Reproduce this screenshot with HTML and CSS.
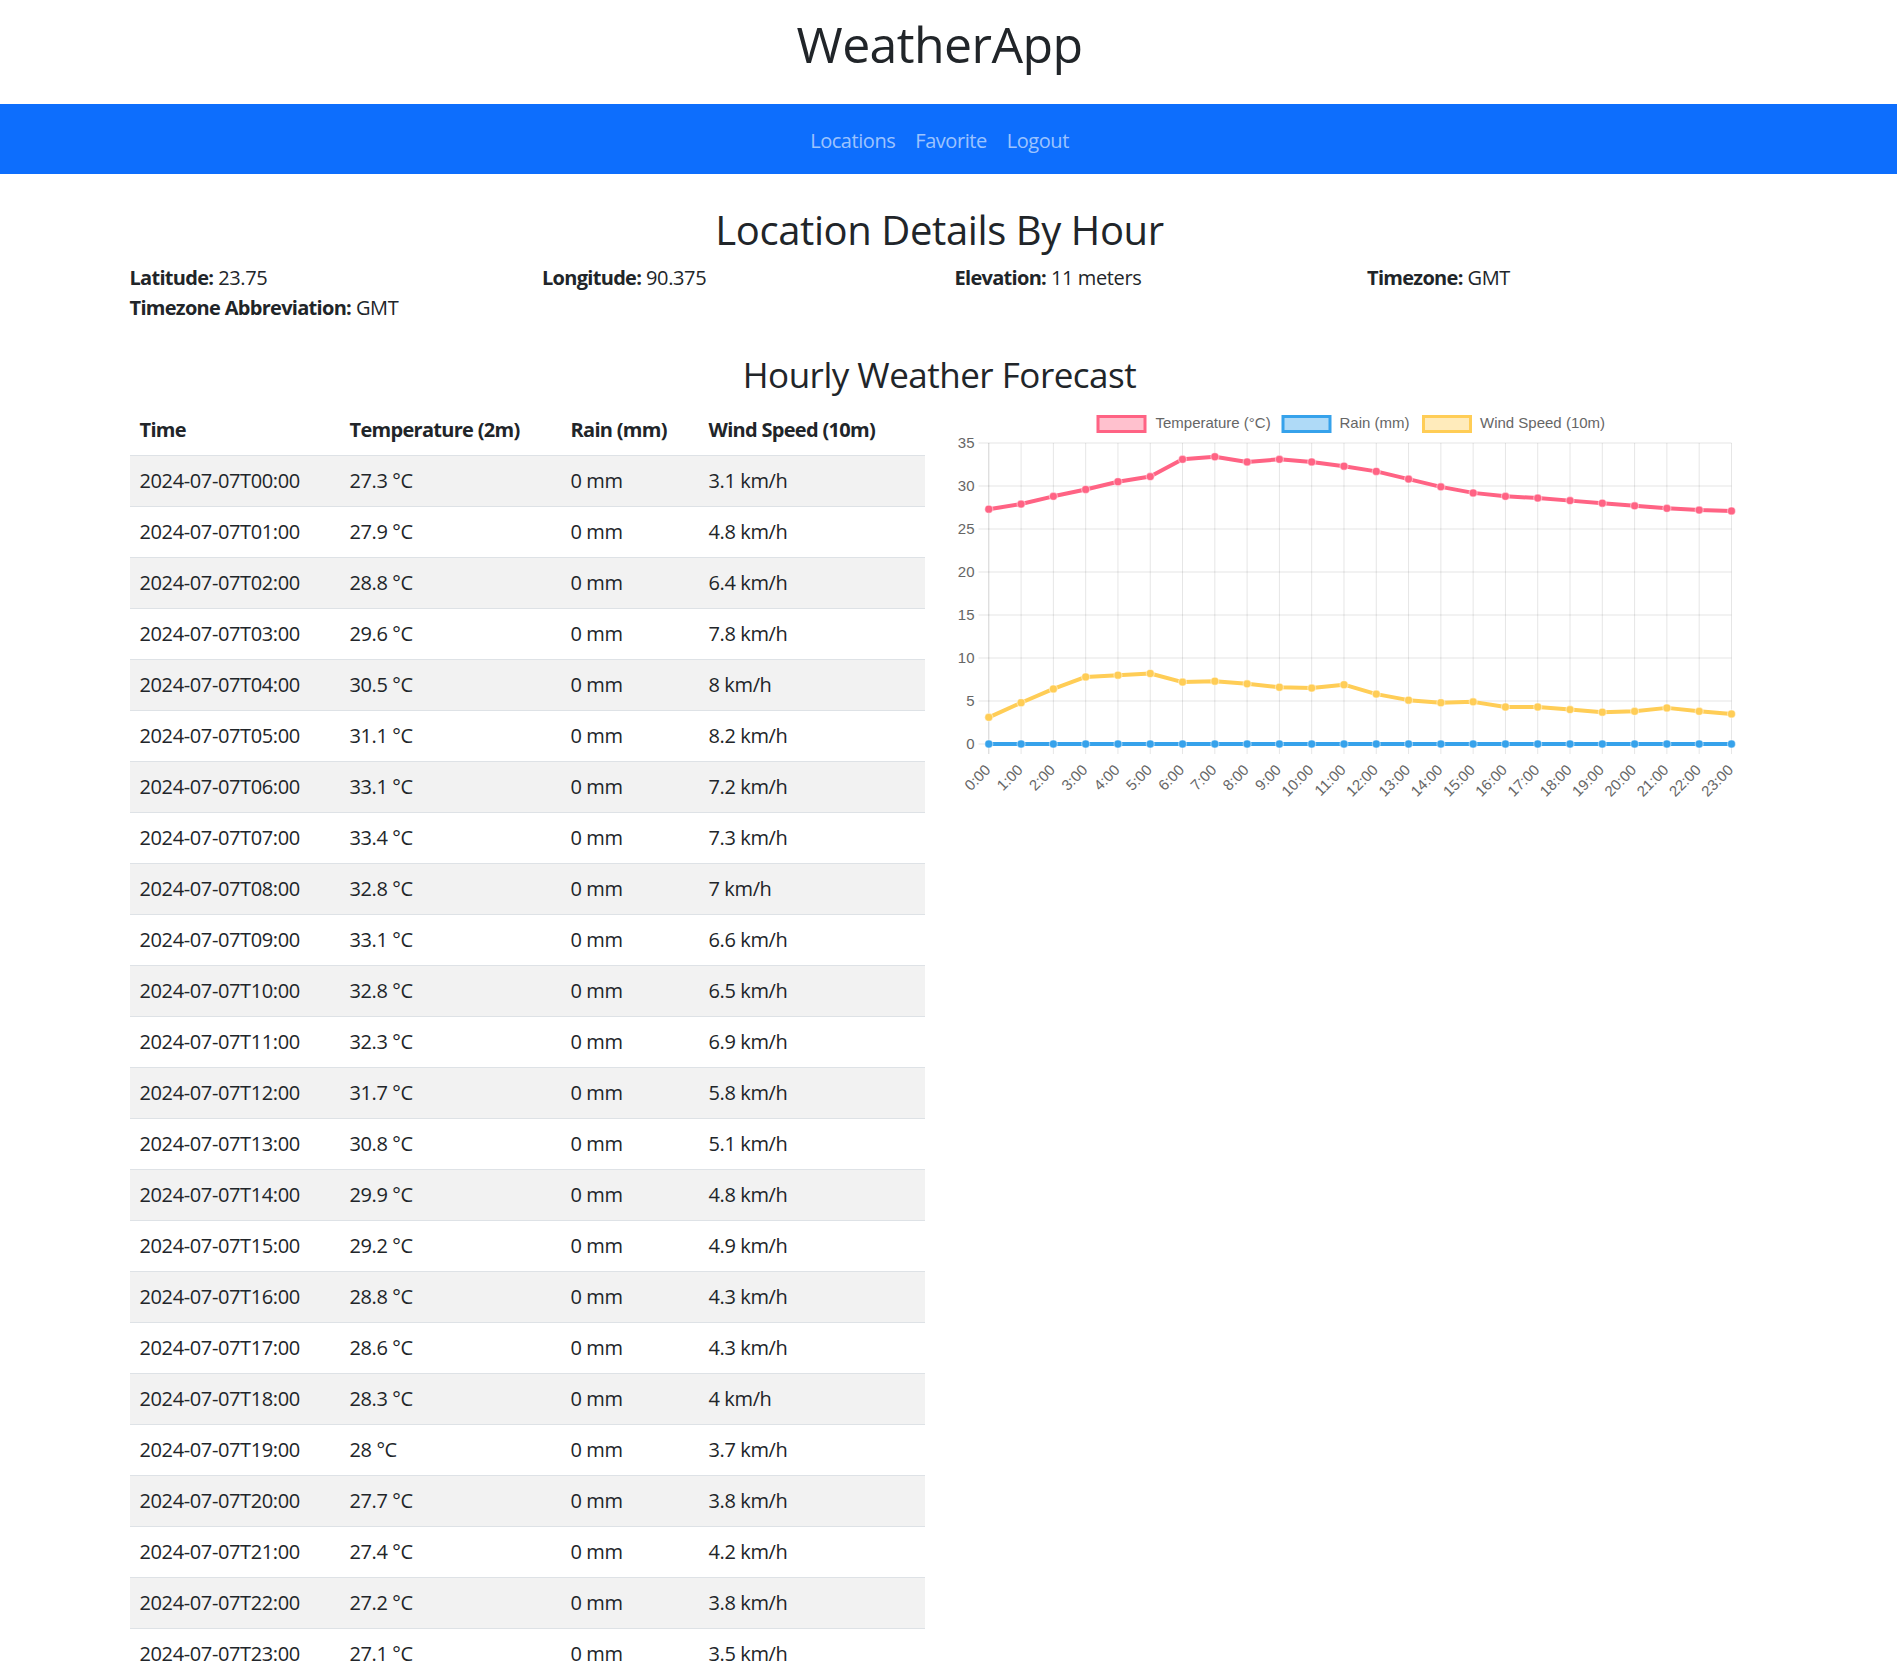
FILE: index.html
```html
<!DOCTYPE html>
<html lang="en">
<head>
<meta charset="utf-8">
<title>WeatherApp</title>
<link rel="stylesheet" href="styles.css">
</head>
<body>
<div class="page">
  <header class="site-header">
    <h1 class="brand">WeatherApp</h1>
  </header>
  <nav class="navbar">
    <div class="nav">
      <a class="nav-link" href="#">Locations</a>
      <a class="nav-link" href="#">Favorite</a>
      <a class="nav-link" href="#">Logout</a>
    </div>
  </nav>
  <main class="container">
    <h2 class="page-title">Location Details By Hour</h2>
    <div class="info-grid">
      <div><b>Latitude:</b> 23.75</div>
      <div><b>Longitude:</b> 90.375</div>
      <div><b>Elevation:</b> 11 meters</div>
      <div><b>Timezone:</b> GMT</div>
      <div><b>Timezone Abbreviation:</b> GMT</div>
    </div>
    <h3 class="section-title">Hourly Weather Forecast</h3>
    <div class="split">
      <table class="table">
        <thead>
          <tr><th class="c-time">Time</th><th class="c-temp">Temperature (2m)</th><th class="c-rain">Rain (mm)</th><th class="c-wind">Wind Speed (10m)</th></tr>
        </thead>
        <tbody>
          <tr><td>2024-07-07T00:00</td><td>27.3 °C</td><td>0 mm</td><td>3.1 km/h</td></tr>
          <tr><td>2024-07-07T01:00</td><td>27.9 °C</td><td>0 mm</td><td>4.8 km/h</td></tr>
          <tr><td>2024-07-07T02:00</td><td>28.8 °C</td><td>0 mm</td><td>6.4 km/h</td></tr>
          <tr><td>2024-07-07T03:00</td><td>29.6 °C</td><td>0 mm</td><td>7.8 km/h</td></tr>
          <tr><td>2024-07-07T04:00</td><td>30.5 °C</td><td>0 mm</td><td>8 km/h</td></tr>
          <tr><td>2024-07-07T05:00</td><td>31.1 °C</td><td>0 mm</td><td>8.2 km/h</td></tr>
          <tr><td>2024-07-07T06:00</td><td>33.1 °C</td><td>0 mm</td><td>7.2 km/h</td></tr>
          <tr><td>2024-07-07T07:00</td><td>33.4 °C</td><td>0 mm</td><td>7.3 km/h</td></tr>
          <tr><td>2024-07-07T08:00</td><td>32.8 °C</td><td>0 mm</td><td>7 km/h</td></tr>
          <tr><td>2024-07-07T09:00</td><td>33.1 °C</td><td>0 mm</td><td>6.6 km/h</td></tr>
          <tr><td>2024-07-07T10:00</td><td>32.8 °C</td><td>0 mm</td><td>6.5 km/h</td></tr>
          <tr><td>2024-07-07T11:00</td><td>32.3 °C</td><td>0 mm</td><td>6.9 km/h</td></tr>
          <tr><td>2024-07-07T12:00</td><td>31.7 °C</td><td>0 mm</td><td>5.8 km/h</td></tr>
          <tr><td>2024-07-07T13:00</td><td>30.8 °C</td><td>0 mm</td><td>5.1 km/h</td></tr>
          <tr><td>2024-07-07T14:00</td><td>29.9 °C</td><td>0 mm</td><td>4.8 km/h</td></tr>
          <tr><td>2024-07-07T15:00</td><td>29.2 °C</td><td>0 mm</td><td>4.9 km/h</td></tr>
          <tr><td>2024-07-07T16:00</td><td>28.8 °C</td><td>0 mm</td><td>4.3 km/h</td></tr>
          <tr><td>2024-07-07T17:00</td><td>28.6 °C</td><td>0 mm</td><td>4.3 km/h</td></tr>
          <tr><td>2024-07-07T18:00</td><td>28.3 °C</td><td>0 mm</td><td>4 km/h</td></tr>
          <tr><td>2024-07-07T19:00</td><td>28 °C</td><td>0 mm</td><td>3.7 km/h</td></tr>
          <tr><td>2024-07-07T20:00</td><td>27.7 °C</td><td>0 mm</td><td>3.8 km/h</td></tr>
          <tr><td>2024-07-07T21:00</td><td>27.4 °C</td><td>0 mm</td><td>4.2 km/h</td></tr>
          <tr><td>2024-07-07T22:00</td><td>27.2 °C</td><td>0 mm</td><td>3.8 km/h</td></tr>
          <tr><td>2024-07-07T23:00</td><td>27.1 °C</td><td>0 mm</td><td>3.5 km/h</td></tr>
        </tbody>
      </table>
      <div class="chart-col">
        <svg class="chart" width="795" height="398" viewBox="0 0 795 398" xmlns="http://www.w3.org/2000/svg">
          <g class="legend">
            <rect class="lg-temp" x="143" y="12.5" width="47" height="15"/>
            <text x="200.5" y="23.5">Temperature (°C)</text>
            <rect class="lg-rain" x="328" y="12.5" width="47" height="15"/>
            <text x="384.5" y="23.5">Rain (mm)</text>
            <rect class="lg-wind" x="468.5" y="12.5" width="47" height="15"/>
            <text x="525" y="23.5">Wind Speed (10m)</text>
          </g>
          <g class="grid">
            <line x1="23.5" y1="340" x2="776.5" y2="340"/>
            <line x1="23.5" y1="297" x2="776.5" y2="297"/>
            <line x1="23.5" y1="254" x2="776.5" y2="254"/>
            <line x1="23.5" y1="211" x2="776.5" y2="211"/>
            <line x1="23.5" y1="168" x2="776.5" y2="168"/>
            <line x1="23.5" y1="125" x2="776.5" y2="125"/>
            <line x1="23.5" y1="82" x2="776.5" y2="82"/>
            <line x1="23.5" y1="39" x2="776.5" y2="39"/>
            <line x1="66.09" y1="39" x2="66.09" y2="350"/>
            <line x1="98.38" y1="39" x2="98.38" y2="350"/>
            <line x1="130.67" y1="39" x2="130.67" y2="350"/>
            <line x1="162.96" y1="39" x2="162.96" y2="350"/>
            <line x1="195.25" y1="39" x2="195.25" y2="350"/>
            <line x1="227.54" y1="39" x2="227.54" y2="350"/>
            <line x1="259.83" y1="39" x2="259.83" y2="350"/>
            <line x1="292.12" y1="39" x2="292.12" y2="350"/>
            <line x1="324.41" y1="39" x2="324.41" y2="350"/>
            <line x1="356.7" y1="39" x2="356.7" y2="350"/>
            <line x1="388.99" y1="39" x2="388.99" y2="350"/>
            <line x1="421.28" y1="39" x2="421.28" y2="350"/>
            <line x1="453.57" y1="39" x2="453.57" y2="350"/>
            <line x1="485.86" y1="39" x2="485.86" y2="350"/>
            <line x1="518.15" y1="39" x2="518.15" y2="350"/>
            <line x1="550.44" y1="39" x2="550.44" y2="350"/>
            <line x1="582.73" y1="39" x2="582.73" y2="350"/>
            <line x1="615.02" y1="39" x2="615.02" y2="350"/>
            <line x1="647.31" y1="39" x2="647.31" y2="350"/>
            <line x1="679.6" y1="39" x2="679.6" y2="350"/>
            <line x1="711.89" y1="39" x2="711.89" y2="350"/>
            <line x1="744.18" y1="39" x2="744.18" y2="350"/>
            <line x1="776.47" y1="39" x2="776.47" y2="350"/>
          </g>
          <line class="axis" x1="33.8" y1="39" x2="33.8" y2="350"/>
          <g class="ylabels">
            <text x="19.5" y="345">0</text>
            <text x="19.5" y="302">5</text>
            <text x="19.5" y="259">10</text>
            <text x="19.5" y="216">15</text>
            <text x="19.5" y="173">20</text>
            <text x="19.5" y="130">25</text>
            <text x="19.5" y="87">30</text>
            <text x="19.5" y="44">35</text>
          </g>
          <g class="xlabels">
            <text transform="translate(32.5 363) rotate(-45)">0:00</text>
            <text transform="translate(64.8 363) rotate(-45)">1:00</text>
            <text transform="translate(97.1 363) rotate(-45)">2:00</text>
            <text transform="translate(129.4 363) rotate(-45)">3:00</text>
            <text transform="translate(161.7 363) rotate(-45)">4:00</text>
            <text transform="translate(194 363) rotate(-45)">5:00</text>
            <text transform="translate(226.2 363) rotate(-45)">6:00</text>
            <text transform="translate(258.5 363) rotate(-45)">7:00</text>
            <text transform="translate(290.8 363) rotate(-45)">8:00</text>
            <text transform="translate(323.1 363) rotate(-45)">9:00</text>
            <text transform="translate(355.4 363) rotate(-45)">10:00</text>
            <text transform="translate(387.7 363) rotate(-45)">11:00</text>
            <text transform="translate(420 363) rotate(-45)">12:00</text>
            <text transform="translate(452.3 363) rotate(-45)">13:00</text>
            <text transform="translate(484.6 363) rotate(-45)">14:00</text>
            <text transform="translate(516.9 363) rotate(-45)">15:00</text>
            <text transform="translate(549.1 363) rotate(-45)">16:00</text>
            <text transform="translate(581.4 363) rotate(-45)">17:00</text>
            <text transform="translate(613.7 363) rotate(-45)">18:00</text>
            <text transform="translate(646 363) rotate(-45)">19:00</text>
            <text transform="translate(678.3 363) rotate(-45)">20:00</text>
            <text transform="translate(710.6 363) rotate(-45)">21:00</text>
            <text transform="translate(742.9 363) rotate(-45)">22:00</text>
            <text transform="translate(775.2 363) rotate(-45)">23:00</text>
          </g>
          <polyline class="ln ln-temp" points="33.8,105.22 66.09,100.06 98.38,92.32 130.67,85.44 162.96,77.7 195.25,72.54 227.54,55.34 259.83,52.76 292.12,57.92 324.41,55.34 356.7,57.92 388.99,62.22 421.28,67.38 453.57,75.12 485.86,82.86 518.15,88.88 550.44,92.32 582.73,94.04 615.02,96.62 647.31,99.2 679.6,101.78 711.89,104.36 744.18,106.08 776.47,106.94"/>
          <polyline class="ln ln-rain" points="33.8,340 776.47,340"/>
          <polyline class="ln ln-wind" points="33.8,313.34 66.09,298.72 98.38,284.96 130.67,272.92 162.96,271.2 195.25,269.48 227.54,278.08 259.83,277.22 292.12,279.8 324.41,283.24 356.7,284.1 388.99,280.66 421.28,290.12 453.57,296.14 485.86,298.72 518.15,297.86 550.44,303.02 582.73,303.02 615.02,305.6 647.31,308.18 679.6,307.32 711.89,303.88 744.18,307.32 776.47,309.9"/>
          <g class="pt pt-temp">
            <circle cx="33.8" cy="105.22" r="4"/><circle cx="66.09" cy="100.06" r="4"/><circle cx="98.38" cy="92.32" r="4"/><circle cx="130.67" cy="85.44" r="4"/><circle cx="162.96" cy="77.7" r="4"/><circle cx="195.25" cy="72.54" r="4"/><circle cx="227.54" cy="55.34" r="4"/><circle cx="259.83" cy="52.76" r="4"/><circle cx="292.12" cy="57.92" r="4"/><circle cx="324.41" cy="55.34" r="4"/><circle cx="356.7" cy="57.92" r="4"/><circle cx="388.99" cy="62.22" r="4"/><circle cx="421.28" cy="67.38" r="4"/><circle cx="453.57" cy="75.12" r="4"/><circle cx="485.86" cy="82.86" r="4"/><circle cx="518.15" cy="88.88" r="4"/><circle cx="550.44" cy="92.32" r="4"/><circle cx="582.73" cy="94.04" r="4"/><circle cx="615.02" cy="96.62" r="4"/><circle cx="647.31" cy="99.2" r="4"/><circle cx="679.6" cy="101.78" r="4"/><circle cx="711.89" cy="104.36" r="4"/><circle cx="744.18" cy="106.08" r="4"/><circle cx="776.47" cy="106.94" r="4"/>
          </g>
          <g class="pt pt-rain">
            <circle cx="33.8" cy="340" r="4"/><circle cx="66.09" cy="340" r="4"/><circle cx="98.38" cy="340" r="4"/><circle cx="130.67" cy="340" r="4"/><circle cx="162.96" cy="340" r="4"/><circle cx="195.25" cy="340" r="4"/><circle cx="227.54" cy="340" r="4"/><circle cx="259.83" cy="340" r="4"/><circle cx="292.12" cy="340" r="4"/><circle cx="324.41" cy="340" r="4"/><circle cx="356.7" cy="340" r="4"/><circle cx="388.99" cy="340" r="4"/><circle cx="421.28" cy="340" r="4"/><circle cx="453.57" cy="340" r="4"/><circle cx="485.86" cy="340" r="4"/><circle cx="518.15" cy="340" r="4"/><circle cx="550.44" cy="340" r="4"/><circle cx="582.73" cy="340" r="4"/><circle cx="615.02" cy="340" r="4"/><circle cx="647.31" cy="340" r="4"/><circle cx="679.6" cy="340" r="4"/><circle cx="711.89" cy="340" r="4"/><circle cx="744.18" cy="340" r="4"/><circle cx="776.47" cy="340" r="4"/>
          </g>
          <g class="pt pt-wind">
            <circle cx="33.8" cy="313.34" r="4"/><circle cx="66.09" cy="298.72" r="4"/><circle cx="98.38" cy="284.96" r="4"/><circle cx="130.67" cy="272.92" r="4"/><circle cx="162.96" cy="271.2" r="4"/><circle cx="195.25" cy="269.48" r="4"/><circle cx="227.54" cy="278.08" r="4"/><circle cx="259.83" cy="277.22" r="4"/><circle cx="292.12" cy="279.8" r="4"/><circle cx="324.41" cy="283.24" r="4"/><circle cx="356.7" cy="284.1" r="4"/><circle cx="388.99" cy="280.66" r="4"/><circle cx="421.28" cy="290.12" r="4"/><circle cx="453.57" cy="296.14" r="4"/><circle cx="485.86" cy="298.72" r="4"/><circle cx="518.15" cy="297.86" r="4"/><circle cx="550.44" cy="303.02" r="4"/><circle cx="582.73" cy="303.02" r="4"/><circle cx="615.02" cy="305.6" r="4"/><circle cx="647.31" cy="308.18" r="4"/><circle cx="679.6" cy="307.32" r="4"/><circle cx="711.89" cy="303.88" r="4"/><circle cx="744.18" cy="307.32" r="4"/><circle cx="776.47" cy="309.9" r="4"/>
          </g>
        </svg>
      </div>
    </div>
  </main>
</div>
</body>
</html>
```

FILE: styles.css
```css
html, body {
  margin: 0;
  height: 1665px;
  overflow: hidden;
}
body {
  font-family: "Open Sans", "Noto Sans", sans-serif;
  font-size: 20px;
  line-height: 30px;
  letter-spacing: -0.38px;
  color: #212529;
  background: #fff;
}
b, th {
  letter-spacing: -0.7px;
}
.page {
  width: 1897px;
}
.site-header {
  width: 1879px;
  padding: 14px 0 30px;
}
.brand {
  margin: 0;
  text-align: center;
  font-size: 50px;
  line-height: 60px;
  font-weight: 500;
  letter-spacing: -0.6px;
}
.navbar {
  background: #0d6efd;
  width: 1897px;
}
.nav {
  width: 1879px;
  display: flex;
  justify-content: center;
  padding: 12px 0 8px;
}
.nav-link {
  padding: 10px;
  color: rgba(255, 255, 255, 0.6);
  text-decoration: none;
  line-height: 30px;
  letter-spacing: -0.45px;
}
.container {
  display: block;
  width: 1620px;
  margin: 32px 0 0 129.5px;
}
.page-title {
  margin: 0 0 9px;
  text-align: center;
  font-size: 40px;
  line-height: 48px;
  font-weight: 500;
  letter-spacing: -0.4px;
}
.info-grid {
  display: grid;
  grid-template-columns: repeat(4, 382.5px);
  column-gap: 30px;
}
.info-grid b {
  font-weight: 700;
}
.section-title {
  margin: 31px 0 9px;
  text-align: center;
  font-size: 35px;
  line-height: 42px;
  font-weight: 500;
  letter-spacing: -0.5px;
}
.split {
  display: grid;
  grid-template-columns: 795px 795px;
  column-gap: 30px;
  align-items: start;
}
.table {
  width: 795px;
  border-collapse: collapse;
  table-layout: fixed;
}
.table th,
.table td {
  padding: 10px;
  line-height: 30px;
  text-align: left;
  border-bottom: 1px solid #dee2e6;
  white-space: nowrap;
}
.table th {
  font-weight: 700;
}
.c-time { width: 190px; }
.c-temp { width: 201px; }
.c-rain { width: 118px; }
.c-wind { width: auto; }
.table tbody tr:nth-child(odd) td {
  background: #f2f2f2;
}
.chart-col {
  width: 795px;
  margin-top: -1px;
}
.chart {
  display: block;
  font-family: "Liberation Sans", Arial, sans-serif;
  font-size: 15px;
  letter-spacing: 0;
}
.chart text {
  fill: #666;
}
.legend rect {
  stroke-width: 3;
}
.lg-temp { fill: rgba(255, 99, 132, 0.4); stroke: rgb(255, 99, 132); }
.lg-rain { fill: rgba(54, 162, 235, 0.4); stroke: rgb(54, 162, 235); }
.lg-wind { fill: rgba(255, 205, 86, 0.4); stroke: rgb(255, 205, 86); }
.grid line {
  stroke: rgba(0, 0, 0, 0.1);
  stroke-width: 1;
}
.axis {
  stroke: rgba(0, 0, 0, 0.18);
  stroke-width: 1;
}
.ylabels text {
  text-anchor: end;
}
.xlabels text {
  text-anchor: end;
  dominant-baseline: central;
}
.ln {
  fill: none;
  stroke-width: 4;
  stroke-linejoin: round;
}
.ln-temp { stroke: rgb(255, 99, 132); }
.ln-rain { stroke: rgb(54, 162, 235); }
.ln-wind { stroke: rgb(255, 205, 86); }
.pt circle {
  stroke: rgba(255, 255, 255, 0.45);
  stroke-width: 1.2;
}
.pt-temp circle { fill: rgb(255, 99, 132); }
.pt-rain circle { fill: rgb(54, 162, 235); }
.pt-wind circle { fill: rgb(255, 205, 86); }
```
